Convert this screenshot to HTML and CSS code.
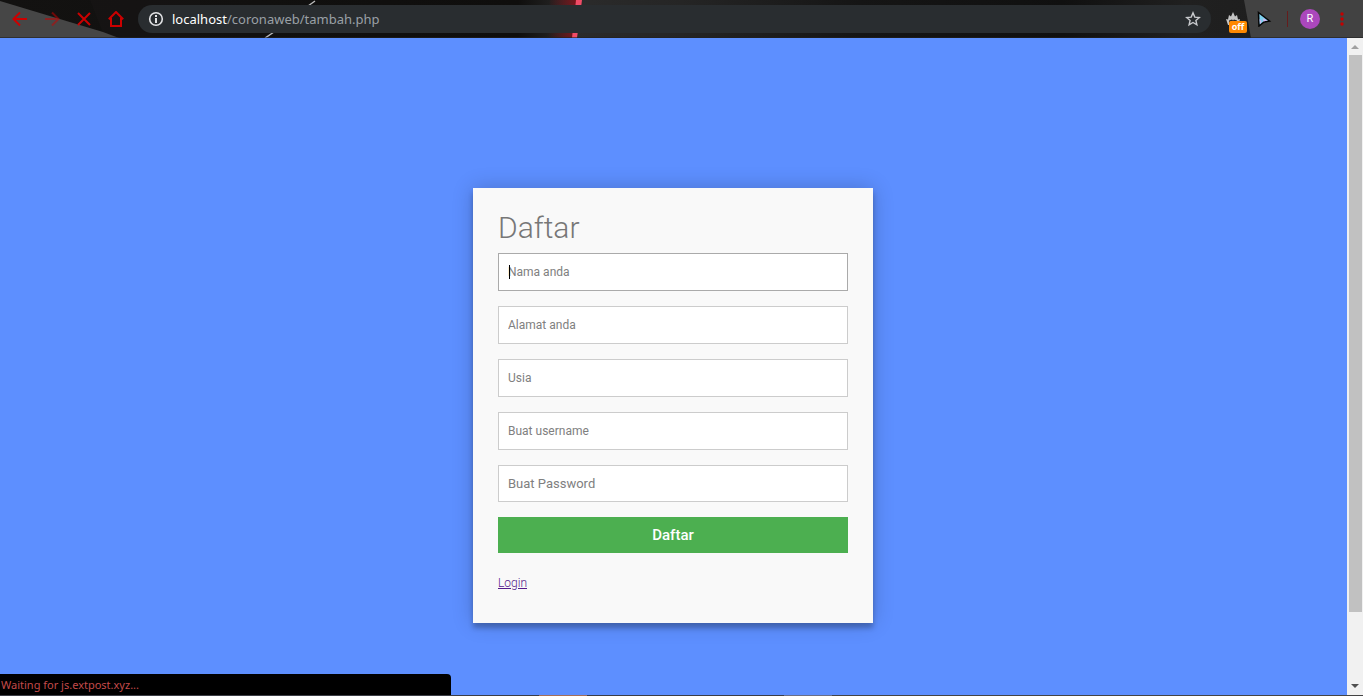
FILE: index.html
```html
<!DOCTYPE html>
<html lang="id">
<head>
<meta charset="utf-8">
<title>Daftar</title>
<link rel="stylesheet" href="styles.css">
</head>
<body>
<div class="browser">
  <header class="toolbar">
    <svg class="theme" viewBox="0 0 1363 38" preserveAspectRatio="none" aria-hidden="true">
      <defs>
        <linearGradient id="base" x1="0" x2="1">
          <stop offset="0" stop-color="#131211"/><stop offset=".38" stop-color="#0f0e0d"/>
          <stop offset=".42" stop-color="#2b2b2b"/><stop offset=".5" stop-color="#252525"/>
          <stop offset=".63" stop-color="#151515"/><stop offset=".78" stop-color="#101010"/>
          <stop offset=".87" stop-color="#202020"/><stop offset="1" stop-color="#1c1c1c"/>
        </linearGradient>
        <linearGradient id="glow" x1="0" x2="1">
          <stop offset="0" stop-color="#6d1217" stop-opacity="0"/><stop offset="1" stop-color="#7d141b"/>
        </linearGradient>
      </defs>
      <path fill="url(#base)" d="M0 0h1363v38H0z"/>
      <path fill="#1d1c1b" d="M90 0h110v38h-95z" opacity=".3"/>
      <path fill="#464646" d="M0 1l103 31 16 6H0z"/>
      <path stroke="#b8b8b8" stroke-width="1.5" d="M315 1l-7 5M274 32l-9 6"/>
      <path fill="url(#glow)" d="M550 0h27l-3 38h-27z"/>
      <path fill="#f04c67" d="M576 0h6l-5 38h-5z"/>
      <path fill="#424242" d="M1244 0h119v38h-112z"/>
      <path fill="#222" d="M0 37h1363v1H0z" opacity=".6"/>
    </svg>
    <nav class="nav" aria-label="Navigasi">
      <button class="icon-button" type="button" aria-label="Kembali">
        <svg width="16" height="16" viewBox="0 0 16 16"><path class="stroke" d="M15 8H2M8 1.5L1.5 8 8 14.5"/></svg>
      </button>
      <button class="icon-button faded" type="button" aria-label="Maju">
        <svg width="16" height="16" viewBox="0 0 16 16"><path class="stroke" d="M1 8h13M8 1.5L14.5 8 8 14.5"/></svg>
      </button>
      <button class="icon-button" type="button" aria-label="Berhenti">
        <svg width="16" height="16" viewBox="0 0 16 16"><path class="stroke" d="M2 2l12 12M14 2L2 14"/></svg>
      </button>
      <button class="icon-button" type="button" aria-label="Beranda">
        <svg width="16" height="16" viewBox="0 0 16 16"><path class="stroke" d="M.8 8.200L8 1l7.200 7.200M3 7v8h10V7"/></svg>
      </button>
    </nav>
    <div class="omnibox">
      <svg width="16" height="16" viewBox="0 0 16 16" aria-hidden="true"><circle cx="8" cy="8" r="6.300" fill="none" stroke="#e2e3e5" stroke-width="1.600"/><path fill="#e2e3e5" d="M7 4h2v2H7zM7 7h2v5H7z"/></svg>
      <div class="url" role="textbox" aria-label="Alamat" tabindex="0"><span class="host">localhost</span>/coronaweb/tambah.php</div>
      <button class="icon-button" type="button" aria-label="Tandai">
        <svg width="16" height="16" viewBox="0 0 16 16"><path fill="none" stroke="#c8cacd" stroke-width="1.400" d="M8 1.900l1.800 4.200 4.500.4-3.400 3 1 4.400L8 11.500l-3.900 2.400 1-4.400-3.400-3 4.500-.4z"/></svg>
      </button>
    </div>
    <div class="tools">
      <button class="icon-button extension" type="button" aria-label="Ekstensi nonaktif">
        <svg width="16" height="16" viewBox="0 0 16 16"><path fill="#c4c4c4" d="M2 11L1 8l2 .5L4 4l2 1.500L8 1l2 4.500L12 4l1 4.500L15 8l-1 4v2H3z"/><path fill="#292929" d="M4 9.500l3-1 1 1 1-1 3 1v3l-1.500-2L8 11l-2.500-.5L4 12.500z"/></svg>
        <span class="badge">off</span>
      </button>
      <button class="icon-button" type="button" aria-label="Kursor">
        <svg width="16" height="16" viewBox="0 0 16 16"><path fill="#7ed0ee" stroke="#050505" stroke-width="1.500" d="M2.500 1.500l11 8.500-5.500 1-5 4z"/><path fill="#d7b5f2" d="M3.500 8l2 2.500L4 13zM7 7.500l4.500 2-4 1z"/></svg>
      </button>
      <span class="divider"></span>
      <button class="avatar" type="button" aria-label="Profil R">R</button>
      <button class="icon-button" type="button" aria-label="Menu">
        <svg width="16" height="16" viewBox="0 0 16 16" fill="#c40000"><circle cx="8" cy="3" r="1.700"/><circle cx="8" cy="8" r="1.700"/><circle cx="8" cy="13" r="1.700"/></svg>
      </button>
    </div>
  </header>

  <div class="viewport">
    <main class="page">
      <form class="card">
        <h3 class="title">Daftar</h3>
        <div class="field">
          <input class="input active" type="text" placeholder="Nama anda" aria-label="Nama anda">
          <span class="caret"></span>
        </div>
        <div class="field"><input class="input" type="text" placeholder="Alamat anda" aria-label="Alamat anda"></div>
        <div class="field"><input class="input" type="text" placeholder="Usia" aria-label="Usia"></div>
        <div class="field"><input class="input" type="text" placeholder="Buat username" aria-label="Buat username"></div>
        <div class="field"><input class="input password" type="password" placeholder="Buat Password" aria-label="Buat Password"></div>
        <button class="submit" type="submit">Daftar</button>
        <a class="login" href="#">Login</a>
      </form>
    </main>
    <div class="scrollbar" aria-hidden="true">
      <svg width="16" height="17" viewBox="0 0 16 17"><path fill="#a0a0a0" d="M4 11l4-4 4 4z"/></svg>
      <div class="track"><div class="thumb"></div></div>
      <svg width="16" height="17" viewBox="0 0 16 17"><path fill="#505050" d="M4 6l4 4 4-4z"/></svg>
    </div>
    <div class="status">Waiting for js.extpost.xyz...</div>
  </div>
  <footer class="edge"></footer>
</div>
</body>
</html>
```

FILE: styles.css
```css
* { box-sizing: border-box; }
body { margin: 0; font-family: Roboto, "Liberation Sans", sans-serif; }
button { border: 0; padding: 0; background: none; font-family: inherit; cursor: pointer; }
svg { display: block; }

.browser { display: flex; flex-direction: column; height: 100vh; overflow: hidden; }

.toolbar { position: relative; display: flex; align-items: center; height: 38px; flex: none; }
.theme { position: absolute; inset: 0; width: 100%; height: 100%; }
.nav { position: relative; display: flex; gap: 16px; padding: 0 14px 0 12px; }
.icon-button { position: relative; flex: none; width: 16px; height: 16px; }
.stroke { fill: none; stroke: #cc0000; stroke-width: 2; }
.faded { opacity: .5; }
.omnibox {
  position: relative; flex: 1; min-width: 0; height: 28px; padding: 0 10px;
  display: flex; align-items: center; gap: 8px;
  border-radius: 14px; background: #292d30;
}
.url {
  flex: 1; min-width: 0; overflow: hidden; white-space: nowrap;
  font: 13px/20px "Noto Sans", "Open Sans", sans-serif; color: #9aa0a6;
}
.host { color: #fff; }
.tools { position: relative; display: flex; align-items: center; gap: 15px; padding: 0 13px 0 14px; }
.badge {
  position: absolute; left: 4px; top: 10px; width: 18px; height: 12px; border-radius: 2px;
  background: #ff8800; color: #fff; text-align: center;
  font: bold 9px/12px "Open Sans", sans-serif;
}
.divider { width: 1px; height: 16px; background: #651c1c; }
.avatar {
  width: 20px; height: 20px; margin: 0 -1px 0 -3px; border-radius: 50%;
  background: #ab47bc; color: #fff; font-size: 11px; line-height: 20px;
}

.viewport { position: relative; display: flex; flex: 1; min-height: 0; }
.page { flex: 1; min-width: 0; padding: 150px 1px 0 0; background: #5d8fff; }
.card {
  width: 400px; max-width: 100%; margin: 0 auto; padding: 25px 25px 31px;
  background: #f9f9f9; color: #777;
  box-shadow: 0 0 20px rgba(0, 0, 0, .2), 0 5px 5px rgba(0, 0, 0, .24);
}
.title { margin: 0 0 10px; font-size: 30px; line-height: 30px; font-weight: 300; }
.field { position: relative; margin-bottom: 15px; }
.input {
  display: block; width: 100%; height: 38px; padding: 0 9px;
  border: 1px solid #ccc; border-radius: 0; outline: 0; background: #fff;
  font: 400 12px/16px Roboto, sans-serif; color: #333;
}
.input::placeholder { color: #808080; opacity: 1; }
.active { border-color: #aaa; }
.password { height: 37px; font-size: 13px; }
.caret { position: absolute; left: 11px; top: 12px; width: 1px; height: 14px; background: #000; }
.submit {
  display: block; width: 100%; height: 36px; background: #4caf50; color: #fff;
  font-size: 15px; font-weight: 500;
}
.login { display: inline-block; margin-top: 21px; font-size: 12px; line-height: 18px; font-weight: 300; color: #551a8b; }

.scrollbar { flex: none; width: 16px; display: flex; flex-direction: column; background: #f1f1f1; }
.track { flex: 1; padding: 0 1px 0 2px; }
.thumb { height: 89.4%; background: #c1c1c1; }
.status {
  position: absolute; left: 0; bottom: 0; width: 451px; height: 21px; padding-left: 1px;
  border-top-right-radius: 4px; background: #000; color: #c34a4a;
  font: 11px/21px "Noto Sans", "Open Sans", sans-serif;
}
.edge {
  flex: none; height: 1px;
  background: linear-gradient(90deg, #3b3d45 0 539px, #a56f58 539px 587px, #3b3d45 587px 784px, #6a6f86 784px 832px, #444 832px);
}
```
